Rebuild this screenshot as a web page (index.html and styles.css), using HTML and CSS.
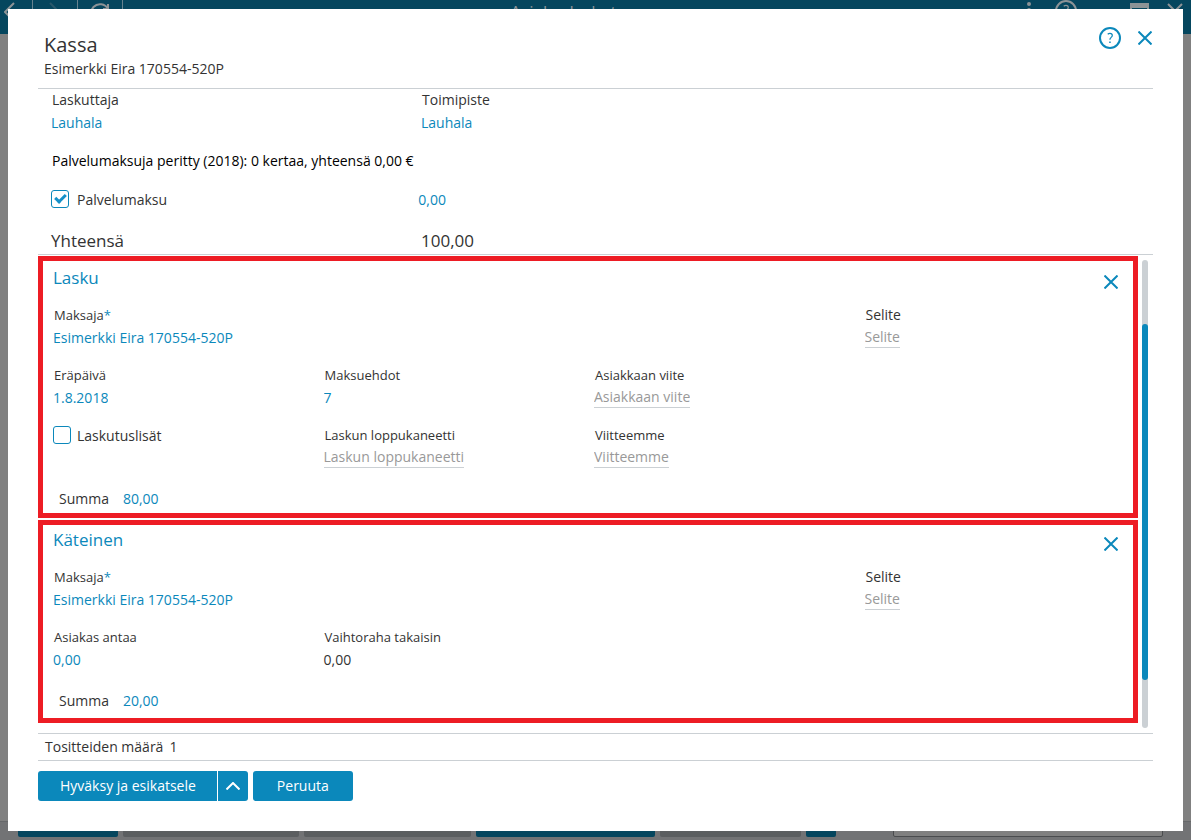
FILE: index.html
```html
<!DOCTYPE html>
<html lang="fi">
<head>
<meta charset="utf-8">
<meta name="viewport" content="width=device-width, initial-scale=1">
<title>Kassa</title>
<link rel="stylesheet" href="styles.css">
</head>
<body>
<div class="app" inert>
  <header class="topbar">
    <nav class="topbar-nav">
      <button class="nav-btn nav-back"><svg width="12" height="20" viewBox="0 0 12 20"><path d="M10 1L1 10l9 9"/></svg></button>
      <button class="nav-btn nav-forward"><svg width="12" height="20" viewBox="0 0 12 20"><path d="M1 1l9 9-9 9"/></svg></button>
      <button class="nav-btn"><svg width="22" height="20" viewBox="0 0 22 20"><path d="M19 7A9 9 0 1 0 20 12M19 2v5h-5"/></svg></button>
    </nav>
    <p class="topbar-title">Asiakaslaskut</p>
    <div class="topbar-tools">
      <svg class="tool-menu" width="4" height="20" viewBox="0 0 4 20"><circle class="solid" cx="2" cy="4" r="2"/><circle class="solid" cx="2" cy="10" r="2"/><circle class="solid" cx="2" cy="16" r="2"/></svg>
      <svg width="22" height="22" viewBox="0 0 22 22"><circle cx="11" cy="11" r="10"/><path class="thin" d="M8.700 6.200q1-.9 2.300-.9 2.300 0 2.300 2.100 0 1-1.200 2-1.200.9-1.200 2.300"/></svg>
      <svg class="tool-window" width="19" height="16" viewBox="0 0 19 16"><path class="solid" d="M0 0h19v16H0zM2 5v9h15V5z" fill-rule="evenodd"/></svg>
      <svg width="16" height="16" viewBox="0 0 16 16"><path d="M1 1l14 14M15 1L1 15"/></svg>
    </div>
  </header>
  <footer class="taskbar">
    <span class="task task-blue task-w100"></span>
    <span class="task task-w176"></span>
    <span class="task task-w167"></span>
    <span class="task task-blue task-w179"></span>
    <span class="task task-w141"></span>
    <span class="task task-blue task-w30"></span>
    <span class="task task-box"></span>
  </footer>
</div>

<main class="dialog" role="dialog" aria-labelledby="dialog-title">
  <header class="dialog-head">
    <div>
      <h1 class="dialog-title" id="dialog-title">Kassa</h1>
      <p class="dialog-subtitle">Esimerkki Eira 170554-520P</p>
    </div>
    <div class="dialog-tools">
      <button class="icon-btn" aria-label="Ohje"><svg width="22" height="22" viewBox="0 0 22 22"><circle cx="11" cy="11" r="10"/><path class="thin" d="M8.700 7.200q1-.9 2.300-.9 2.300 0 2.300 2.100 0 1-1.200 2-1.200.9-1.200 2.300"/><path class="solid" d="M10.200 14.500h1.500V16h-1.500z"/></svg></button>
      <button class="icon-btn" aria-label="Sulje"><svg width="14" height="14" viewBox="0 0 14 14"><path d="M.5.5l13 13M13.500.5l-13 13"/></svg></button>
    </div>
  </header>

  <section class="summary">
    <div class="summary-row">
      <div class="field">
        <label class="label label-large" for="biller">Laskuttaja</label>
        <input class="value" id="biller" value="Lauhala">
      </div>
      <div class="field">
        <label class="label label-large" for="office">Toimipiste</label>
        <input class="value" id="office" value="Lauhala">
      </div>
    </div>
    <p class="fees">Palvelumaksuja peritty (2018): 0 kertaa, yhteensä 0,00 €</p>
    <div class="summary-row summary-fee">
      <label class="check"><input class="check-box" type="checkbox" checked>Palvelumaksu</label>
      <input class="value" aria-label="Palvelumaksu" value="0,00">
    </div>
    <div class="summary-row summary-total">
      <span>Yhteensä</span>
      <span>100,00</span>
    </div>
  </section>

  <div class="payments">
    <div class="cards">
      <section class="card card-invoice">
        <header class="card-head">
          <h2 class="card-title">Lasku</h2>
          <button class="icon-btn" aria-label="Poista lasku"><svg width="14" height="14" viewBox="0 0 14 14"><path d="M.5.5l13 13M13.500.5l-13 13"/></svg></button>
        </header>
        <div class="card-row">
          <div class="field field-wide">
            <label class="label" for="payer1">Maksaja<span class="star">*</span></label>
            <input class="value" id="payer1" value="Esimerkki Eira 170554-520P">
          </div>
          <div class="field">
            <label class="label label-large" for="note1">Selite</label>
            <input class="value" id="note1" placeholder="Selite">
          </div>
        </div>
        <div class="card-row">
          <div class="field">
            <label class="label" for="due">Eräpäivä</label>
            <input class="value" id="due" value="1.8.2018">
          </div>
          <div class="field">
            <label class="label" for="terms">Maksuehdot</label>
            <input class="value" id="terms" value="7">
          </div>
          <div class="field">
            <label class="label" for="ref">Asiakkaan viite</label>
            <input class="value" id="ref" placeholder="Asiakkaan viite">
          </div>
        </div>
        <div class="card-row">
          <label class="check"><input class="check-box" type="checkbox">Laskutuslisät</label>
          <div class="field">
            <label class="label" for="caption">Laskun loppukaneetti</label>
            <input class="value" id="caption" placeholder="Laskun loppukaneetti">
          </div>
          <div class="field">
            <label class="label" for="ourref">Viitteemme</label>
            <input class="value" id="ourref" placeholder="Viitteemme">
          </div>
        </div>
        <div class="sum">
          <label for="sum1">Summa</label>
          <input class="value" id="sum1" value="80,00">
        </div>
      </section>

      <section class="card card-cash">
        <header class="card-head">
          <h2 class="card-title">Käteinen</h2>
          <button class="icon-btn" aria-label="Poista käteinen"><svg width="14" height="14" viewBox="0 0 14 14"><path d="M.5.5l13 13M13.500.5l-13 13"/></svg></button>
        </header>
        <div class="card-row">
          <div class="field field-wide">
            <label class="label" for="payer2">Maksaja<span class="star">*</span></label>
            <input class="value" id="payer2" value="Esimerkki Eira 170554-520P">
          </div>
          <div class="field">
            <label class="label label-large" for="note2">Selite</label>
            <input class="value" id="note2" placeholder="Selite">
          </div>
        </div>
        <div class="card-row">
          <div class="field">
            <label class="label" for="given">Asiakas antaa</label>
            <input class="value" id="given" value="0,00">
          </div>
          <div class="field">
            <span class="label">Vaihtoraha takaisin</span>
            <output class="change">0,00</output>
          </div>
        </div>
        <div class="sum">
          <label for="sum2">Summa</label>
          <input class="value" id="sum2" value="20,00">
        </div>
      </section>
    </div>
    <div class="scroll-track"><div class="scroll-thumb"></div></div>
  </div>

  <p class="receipts">Tositteiden määrä <span>1</span></p>

  <footer class="actions">
    <div class="split">
      <button class="btn btn-main">Hyväksy ja esikatsele</button>
      <button class="btn btn-more" aria-label="Lisää"><svg width="14" height="8" viewBox="0 0 14 8"><path d="M.5 7.500L7 1l6.500 6.500"/></svg></button>
    </div>
    <button class="btn btn-cancel">Peruuta</button>
  </footer>
</main>
</body>
</html>
```
FILE: styles.css
```css
*, *::before {
  box-sizing: border-box;
}

body {
  margin: 0;
  min-height: 100vh;
  background: #808080;
  color: #333;
  font: 14px/24px "Segoe UI", "Open Sans", "Noto Sans", sans-serif;
}

h1, h2, p {
  margin: 0;
  font-weight: 400;
}

button, input {
  margin: 0;
  padding: 0;
  border: 0;
  background: none;
  color: inherit;
  font: inherit;
}

svg {
  display: block;
  fill: none;
  stroke: currentColor;
  stroke-width: 2;
}

svg .thin {
  stroke-width: 1.2;
}

svg .solid {
  fill: currentColor;
  stroke: none;
}

/* Dimmed application behind the dialog */
.app {
  display: flex;
  flex-direction: column;
  justify-content: space-between;
  min-height: 100vh;
}

.topbar {
  display: grid;
  grid-template-columns: 1fr auto 1fr;
  height: 34px;
  background: #05465e;
  color: #8c9396;
  overflow: hidden;
}

.topbar-nav {
  display: flex;
}

.nav-btn {
  display: flex;
  justify-content: center;
  width: 45px;
  padding-top: 2px;
  border-right: 1px solid #67838f;
}

.nav-back {
  width: 33px;
  padding-right: 12px;
}

.nav-forward {
  color: #29586b;
}

.topbar-title {
  padding-right: 64px;
  font-size: 17px;
  line-height: 24px;
}

.topbar-tools {
  display: flex;
  justify-content: flex-end;
  gap: 18px;
  padding-right: 8px;
}

.tool-menu {
  margin-right: 6px;
}

.tool-window {
  margin: 3px 0 0 35px;
}

.topbar-tools > :last-child {
  margin-top: 3px;
}

.taskbar {
  display: flex;
  gap: 5px;
  height: 19px;
  padding: 0 28px 3px 18px;
  border-top: 1px solid #66686a;
  background: #727375;
}

.task {
  border-radius: 0 0 2px 2px;
  background: #5b5e60;
}

.task-blue { background: #05465e; }
.task-w100 { width: 100px; }
.task-w176 { width: 176px; }
.task-w167 { width: 167px; }
.task-w179 { width: 179px; }
.task-w141 { width: 141px; }
.task-w30 { width: 30px; }

.task-box {
  width: 270px;
  margin-left: auto;
  border: 1px solid #4a4c4e;
  background: #808080;
}

/* Dialog */
.dialog {
  position: absolute;
  inset: 9px 8px;
  display: flex;
  flex-direction: column;
  padding: 0 30px 30px;
  background: #fff;
}

.dialog-head {
  display: flex;
  justify-content: space-between;
  padding: 24px 0 7px 6px;
  border-bottom: 1px solid #cbd0d4;
}

.dialog-title {
  font-size: 20px;
  line-height: 24px;
}

.dialog-tools {
  display: flex;
  align-items: center;
  gap: 17px;
  height: 22px;
  margin-top: -6px;
  padding-right: 1px;
}

.icon-btn {
  color: #0b88bb;
}

.summary {
  display: flex;
  flex-direction: column;
  padding-left: 13px;
  border-bottom: 1px solid #cbd0d4;
}

.summary-row {
  display: grid;
  grid-template-columns: repeat(3, 1fr);
  gap: 8px;
}

.field {
  display: flex;
  flex-direction: column;
  align-items: flex-start;
}

.label {
  padding-left: 1px;
  font-size: 13px;
  line-height: 22px;
}

.label-large {
  font-size: 14px;
}

.star {
  color: #0b88bb;
}

.value {
  field-sizing: content;
  justify-self: start;
  height: 24px;
  color: #0b88bb;
}

.value::placeholder {
  color: #999;
  opacity: 1;
}

.value:placeholder-shown {
  height: 22px;
  margin-bottom: 2px;
  padding-top: 1px;
  border-bottom: 1px solid #cbd0d4;
}

.fees {
  padding: 14px 0 0 1px;
  color: #000;
}

.summary-fee {
  gap: 0;
  padding-top: 15px;
}

.summary-total {
  padding-top: 16px;
  font-size: 17px;
  line-height: 26px;
}

.check {
  display: flex;
  align-items: flex-start;
  gap: 8px;
}

.check-box {
  appearance: none;
  width: 18px;
  height: 18px;
  margin-top: 2px;
  border: 1px solid #0b88bb;
  border-radius: 3px;
}

.check-box:checked::before {
  content: "";
  display: block;
  width: 11px;
  height: 7px;
  margin: 3px;
  border: solid #1590c8;
  border-width: 0 0 3px 3px;
  transform: rotate(-45deg);
}

.payments {
  display: flex;
  flex: 1;
  gap: 4px;
  padding: 1px 5px 5px 0;
}

.cards {
  display: flex;
  flex: 1;
  flex-direction: column;
  gap: 2px;
}

.card {
  display: flex;
  flex-direction: column;
  padding-left: 10px;
  border: 5px solid #ed1c24;
}

.card-invoice {
  padding-top: 2px;
  padding-bottom: 2px;
}

.card-cash {
  padding-bottom: 5px;
}

.card-head {
  display: flex;
  align-items: flex-start;
  justify-content: space-between;
  padding-right: 15px;
  margin-bottom: 11px;
}

.card-head .icon-btn {
  padding-top: 12px;
}

.card-title {
  color: #0b88bb;
  font-size: 17px;
  line-height: 30px;
}

.card-row {
  display: grid;
  grid-template-columns: repeat(4, 1fr);
  column-gap: 2px;
  margin-bottom: 14px;
}

.card-row .check {
  gap: 6px;
}

.field-wide {
  grid-column: span 3;
}

.sum {
  display: flex;
  gap: 14px;
  padding: 3px 0 0 6px;
}

.scroll-track {
  width: 6px;
  margin-top: 4px;
  padding-top: 64px;
  border-radius: 3px;
  background: #cbd0d4;
}

.scroll-thumb {
  height: 88%;
  border-radius: 3px;
  background: #0b88bb;
}

.receipts {
  display: flex;
  gap: 6px;
  padding: 1px 7px;
  border: solid #cbd0d4;
  border-width: 1px 0;
}

.actions {
  display: flex;
  gap: 5px;
  padding-top: 10px;
}

.split {
  display: flex;
  gap: 1px;
}

.btn {
  height: 30px;
  border-radius: 3px;
  background: #0b88bb;
  color: #fff;
}

.btn-main {
  padding: 0 21px 0 22px;
  border-radius: 3px 0 0 3px;
}

.btn-more {
  display: grid;
  place-items: center;
  width: 30px;
  border-radius: 0 3px 3px 0;
}

.btn-cancel {
  padding: 0 24px;
}
```
